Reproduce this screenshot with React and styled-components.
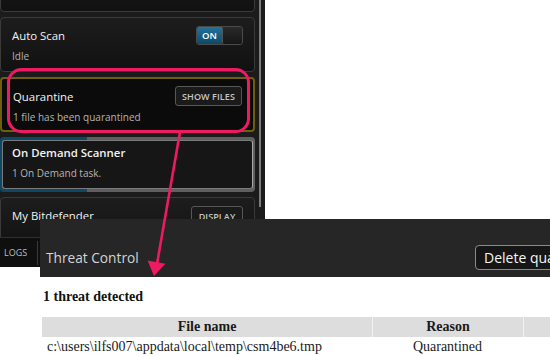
import styled, { createGlobalStyle } from "styled-components";

const GlobalStyle = createGlobalStyle`
  html, body {
    margin: 0;
    padding: 0;
    background: #ffffff;
  }
  * {
    box-sizing: border-box;
  }
`;

const Page = styled.div`
  position: relative;
  width: 550px;
  height: 356px;
  overflow: hidden;
  background: #ffffff;
`;

const Sidebar = styled.div`
  width: 265px;
  height: 267px;
  background: #1b1b1b;
  display: grid;
  grid-template-rows: 237px 30px;
  font-family: "Open Sans", "Noto Sans", sans-serif;
`;

const ListArea = styled.div`
  display: flex;
  overflow: hidden;
`;

const CardColumn = styled.div`
  width: 255px;
  margin-top: -43px;
  display: flex;
  flex-direction: column;
  gap: 5px;
  flex-shrink: 0;
`;

const ScrollTrack = styled.div`
  width: 10px;
  padding-left: 4px;
`;

const ScrollThumb = styled.div`
  width: 2px;
  height: 207px;
  background: #7d7d7d;
`;

const Card = styled.div`
  height: 55px;
  flex-shrink: 0;
  display: flex;
  justify-content: space-between;
  padding: 0 11px;
  border-radius: 4px;
  border: ${(p) => (p.$gold ? "2px solid #6f5e0c" : "1px solid #3a3a3a")};
  background: ${(p) =>
    p.$gold ? "#0b0b0b" : "linear-gradient(#1d1d1d, #111111)"};
`;

const ProgressFrame = styled.div`
  height: 55px;
  flex-shrink: 0;
  padding: 3px 2px;
  border-radius: 4px;
  background: linear-gradient(
    to right,
    #0e4864 0,
    #0e4864 87px,
    #5f5f5f 87px,
    #5f5f5f 100%
  );
`;

const ProgressInner = styled.div`
  height: 100%;
  display: flex;
  padding: 0 9px;
  border-radius: 3px;
  border: 1px solid #7a7a7a;
  border-right-color: #a8a8a8;
  background: #161616;
`;

const CardText = styled.div`
  display: flex;
  flex-direction: column;
  padding-top: ${(p) => (p.$inner ? "3px" : "9px")};
`;

const Title = styled.div`
  font-size: 11.4px;
  line-height: 18px;
  color: #f2f2f2;
  font-weight: ${(p) => (p.$bold ? 600 : 400)};
  white-space: nowrap;
`;

const Subtitle = styled.div`
  font-size: 10px;
  line-height: 18px;
  margin-top: 2px;
  color: #b4b4b4;
  white-space: nowrap;
`;

const SmallButton = styled.div`
  margin-top: ${(p) => (p.$top ? p.$top : "8px")};
  height: 20px;
  width: ${(p) => p.$width};
  display: flex;
  align-items: center;
  justify-content: center;
  border: 1px solid #575757;
  border-radius: 3px;
  background: #1a1a1a;
  color: #c6c6c6;
  font-size: 9px;
  font-weight: 600;
  letter-spacing: 0.1px;
`;

const Toggle = styled.div`
  margin-top: 8px;
  width: 47px;
  height: 19px;
  display: flex;
  border: 1px solid #4a4a4a;
  border-radius: 3px;
  overflow: hidden;
`;

const ToggleOn = styled.div`
  width: 25px;
  display: flex;
  align-items: center;
  justify-content: center;
  background: linear-gradient(#23739b, #0e4966);
  color: #ffffff;
  font-size: 9.5px;
  font-weight: 600;
`;

const ToggleKnob = styled.div`
  flex: 1;
  background: linear-gradient(#2a2a2a, #161616);
  border-left: 1px solid #555;
  border-radius: 2px;
`;

const BottomBar = styled.div`
  display: flex;
  align-items: center;
  background: #0f0f0f;
  border-top: 1px solid #2f2f2f;
`;

const BarLabel = styled.div`
  width: 38px;
  padding-left: 4px;
  font-size: 9px;
  color: #bdbdbd;
  border-right: 1px solid #3a3a3a;
  line-height: 24px;
`;

const ThreatWindow = styled.div`
  position: relative;
  z-index: 1;
  margin-top: -48px;
  margin-left: 40px;
  width: 510px;
  height: 58px;
  padding-top: 18px;
  display: grid;
  grid-template-columns: 435px 1fr;
  align-items: center;
  background: #262626;
  font-family: "Open Sans", "Noto Sans", sans-serif;
`;

const WindowTitle = styled.div`
  padding-left: 6px;
  font-size: 13.7px;
  color: #d4d4d4;
`;

const ButtonSlot = styled.div`
  display: flex;
`;

const WindowButton = styled.div`
  height: 25px;
  padding: 0 8px;
  display: flex;
  align-items: center;
  flex-shrink: 0;
  white-space: nowrap;
  border: 1px solid #8a8a8a;
  border-radius: 4px;
  background: #161616;
  color: #f4f4f4;
  font-size: 14px;
`;

const Content = styled.div`
  margin-left: 42px;
  font-family: "Liberation Serif", "Times New Roman", serif;
`;

const Heading = styled.div`
  margin-top: 10px;
  margin-left: 1px;
  font-size: 14px;
  font-weight: 700;
  line-height: 20px;
  color: #111;
`;

const Table = styled.div`
  margin-top: 10px;
  width: 560px;
`;

const Row = styled.div`
  display: grid;
  grid-template-columns: 330px 151px 1fr;
  height: 20px;
  background: ${(p) => (p.$head ? "#dddddd" : "transparent")};
`;

const Cell = styled.div`
  display: flex;
  align-items: center;
  justify-content: ${(p) => (p.$left ? "flex-start" : "center")};
  padding-left: ${(p) => (p.$left ? "5px" : "0")};
  font-size: 14px;
  font-weight: ${(p) => (p.$head ? 700 : 400)};
  color: #1a1a1a;
  border-left: ${(p) => (p.$divider ? "1px solid #f2f2f2" : "none")};
  white-space: nowrap;
`;

const Overlay = styled.svg`
  position: absolute;
  left: 0;
  top: 0;
  z-index: 2;
  pointer-events: none;
`;

export default function App() {
  return (
    <Page>
      <GlobalStyle />
      <Sidebar>
        <ListArea>
          <CardColumn>
            <Card />
            <Card>
              <CardText>
                <Title>Auto Scan</Title>
                <Subtitle>Idle</Subtitle>
              </CardText>
              <Toggle>
                <ToggleOn>ON</ToggleOn>
                <ToggleKnob />
              </Toggle>
            </Card>
            <Card $gold>
              <CardText>
                <Title>Quarantine</Title>
                <Subtitle>1 file has been quarantined</Subtitle>
              </CardText>
              <SmallButton $width="67px" $top="7px">
                SHOW FILES
              </SmallButton>
            </Card>
            <ProgressFrame>
              <ProgressInner>
                <CardText $inner>
                  <Title $bold>On Demand Scanner</Title>
                  <Subtitle>1 On Demand task.</Subtitle>
                </CardText>
              </ProgressInner>
            </ProgressFrame>
            <Card>
              <CardText>
                <Title>My Bitdefender</Title>
              </CardText>
              <SmallButton $width="52px">DISPLAY</SmallButton>
            </Card>
          </CardColumn>
          <ScrollTrack>
            <ScrollThumb />
          </ScrollTrack>
        </ListArea>
        <BottomBar>
          <BarLabel>LOGS</BarLabel>
        </BottomBar>
      </Sidebar>

      <ThreatWindow>
        <WindowTitle>Threat Control</WindowTitle>
        <ButtonSlot>
          <WindowButton>Delete quarantined</WindowButton>
        </ButtonSlot>
      </ThreatWindow>

      <Content>
        <Heading>1 threat detected</Heading>
        <Table>
          <Row $head>
            <Cell $head>File name</Cell>
            <Cell $head $divider>Reason</Cell>
            <Cell $head $divider />
          </Row>
          <Row>
            <Cell $left>c:\users\ilfs007\appdata\local\temp\csm4be6.tmp</Cell>
            <Cell>Quarantined</Cell>
            <Cell />
          </Row>
        </Table>
      </Content>

      <Overlay width="550" height="356" viewBox="0 0 550 356">
        <rect
          x="8.5"
          y="69.5"
          width="240"
          height="62"
          rx="13"
          fill="none"
          stroke="#ee1a62"
          strokeWidth="3"
        />
        <line
          x1="180"
          y1="132"
          x2="157"
          y2="264"
          stroke="#ee1a62"
          strokeWidth="2.6"
        />
        <polygon points="154,276 147.6,260.6 165.4,263.8" fill="#ee1a62" />
      </Overlay>
    </Page>
  );
}
